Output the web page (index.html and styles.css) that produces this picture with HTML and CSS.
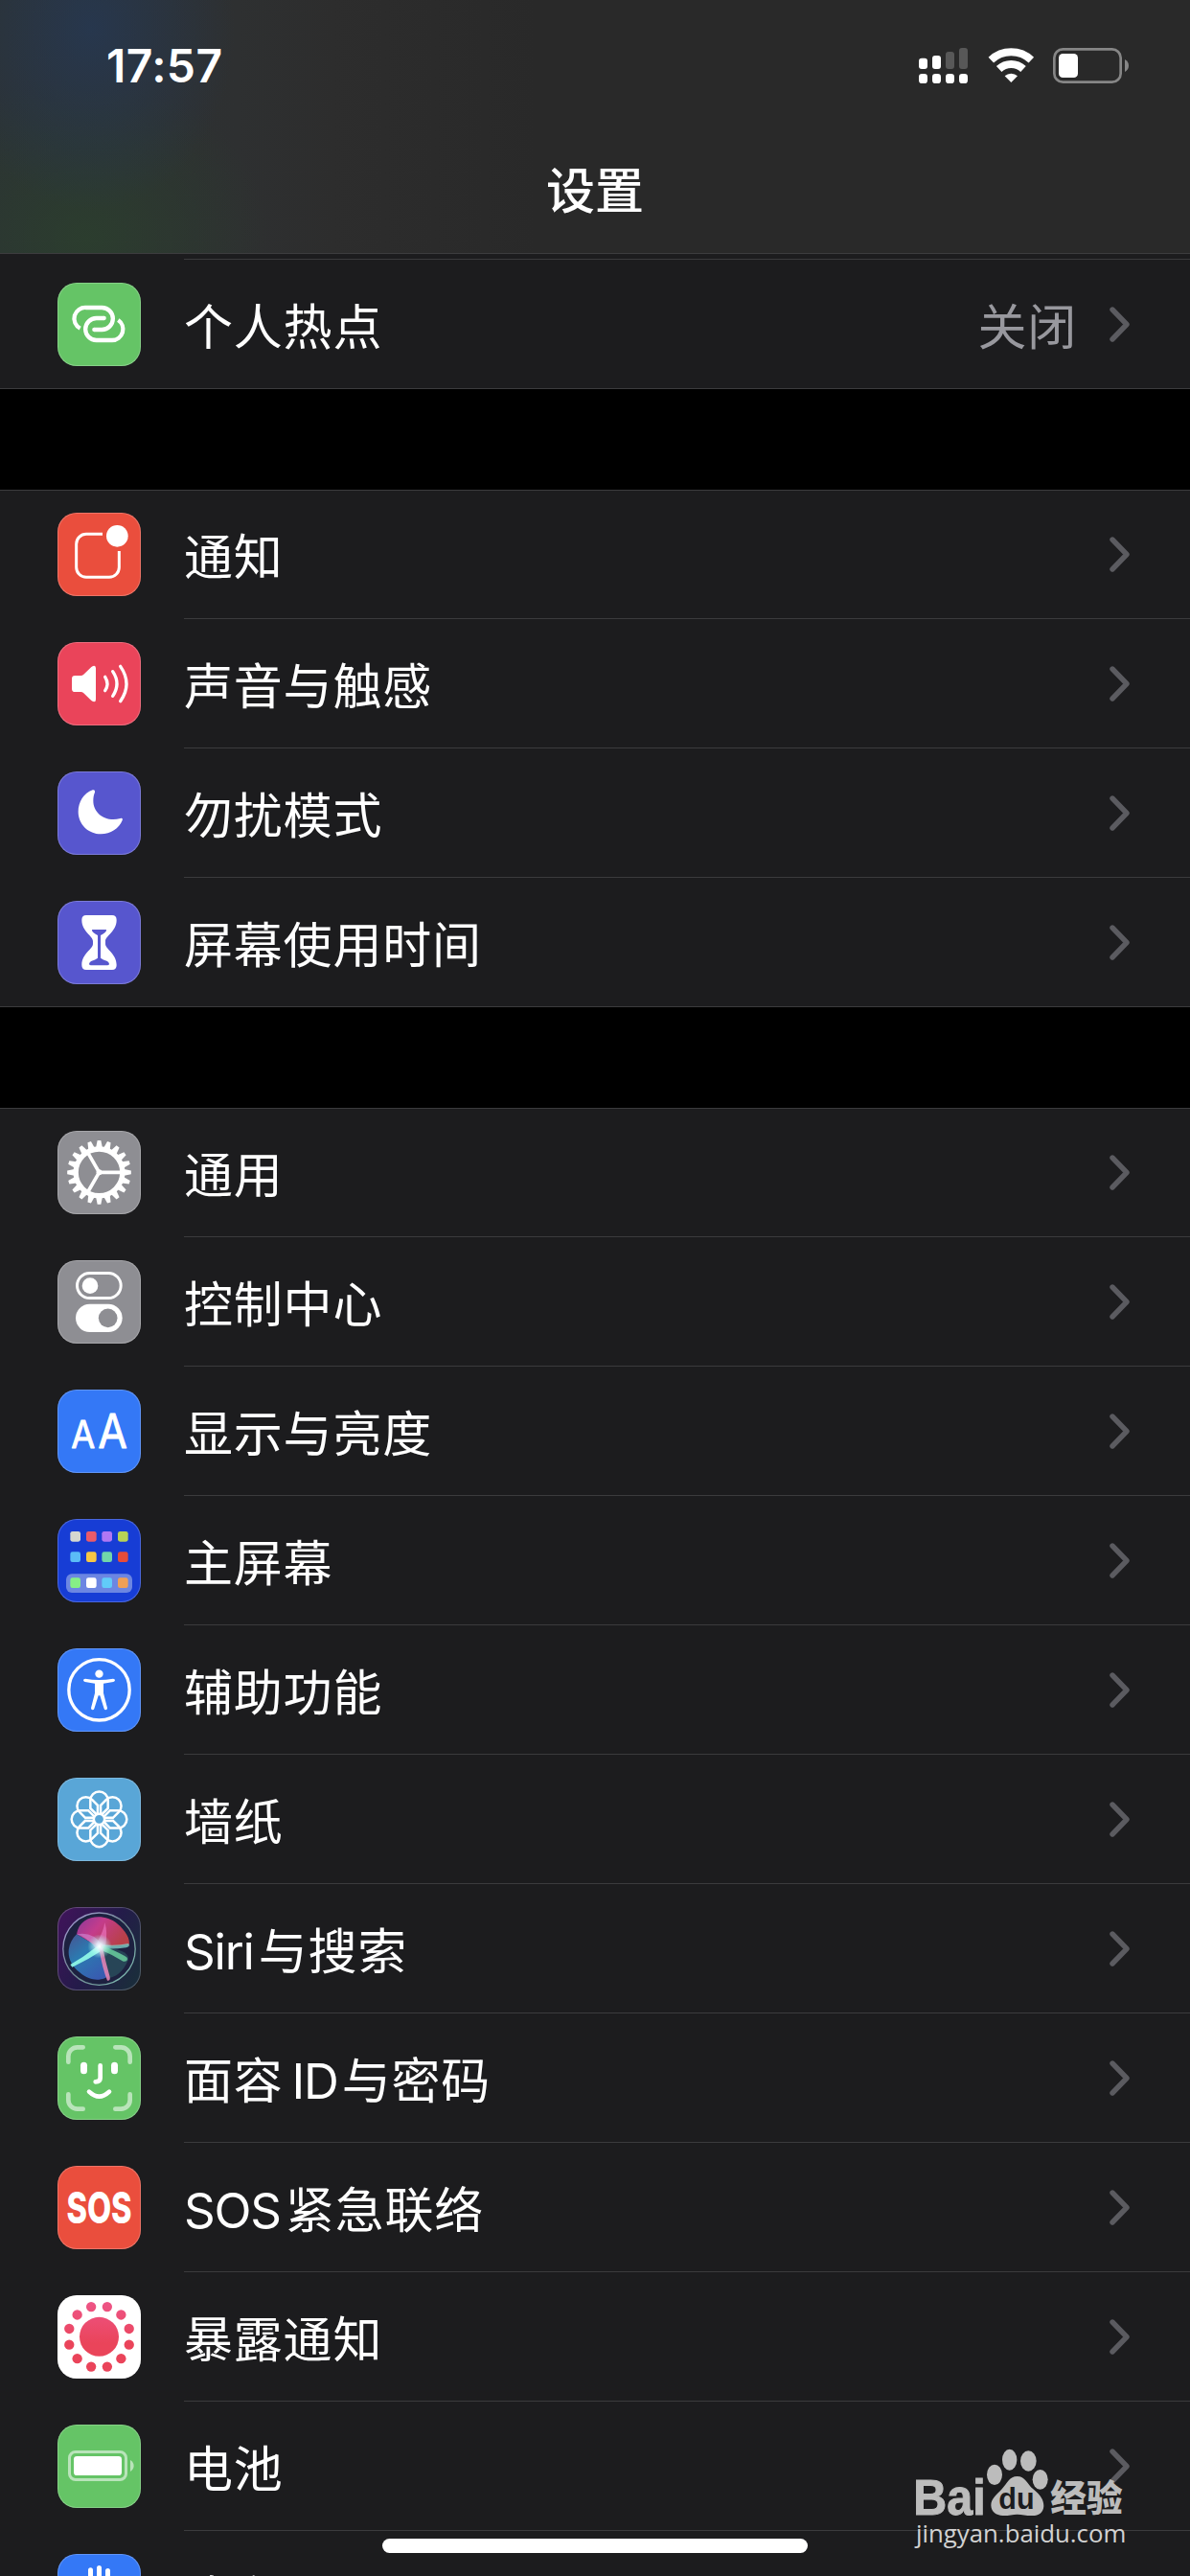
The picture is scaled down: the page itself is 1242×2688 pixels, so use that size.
FILE: index.html
```html
<!DOCTYPE html>
<html lang="zh-CN">
<head>
<meta charset="utf-8">
<title>设置</title>
<link rel="stylesheet" href="styles.css">
</head>
<body>
<svg class="defs" aria-hidden="true">
  <defs>
    <symbol id="chevron" viewBox="0 0 21 37"><path d="M3 3 L18 18.5 L3 34" fill="none" stroke="#5b5b60" stroke-width="5.4" stroke-linecap="round" stroke-linejoin="round"/></symbol>
    <path id="tooth" d="M-10 -78 L-5.5 -100 H5.5 L10 -78Z"/>
    <g id="teeth"><use href="#tooth"/><use href="#tooth" transform="rotate(18)"/><use href="#tooth" transform="rotate(36)"/><use href="#tooth" transform="rotate(54)"/><use href="#tooth" transform="rotate(72)"/></g>
    <path id="petal" d="M-27.500 -34 V-59 A27.500 27.500 0 0 1 27.500 -59 V-34 L7 -14 H-7Z"/>
    <linearGradient id="virus" gradientUnits="userSpaceOnUse" x1="0" y1="20" x2="0" y2="150"><stop offset="0" stop-color="#ee5587"/><stop offset="1" stop-color="#ea445a"/></linearGradient>
    <radialGradient id="siri-glow"><stop offset="0" stop-color="#fff"/><stop offset=".25" stop-color="#e8fbff" stop-opacity=".85"/><stop offset="1" stop-color="#9fe" stop-opacity="0"/></radialGradient>
    <linearGradient id="siri-pink" x1="0" y1="0" x2="1" y2=".5"><stop offset="0" stop-color="#8a3a9c"/><stop offset=".45" stop-color="#c43c8b"/><stop offset="1" stop-color="#b84048"/></linearGradient>
    <linearGradient id="siri-blue" x1="0" y1="0" x2=".7" y2="1"><stop offset="0" stop-color="#4b5a9c"/><stop offset=".45" stop-color="#2d84bd"/><stop offset="1" stop-color="#3b62bd"/></linearGradient>
    <linearGradient id="siri-ring" x1="0" y1="0" x2="1" y2="1"><stop offset="0" stop-color="#a79ad8"/><stop offset=".5" stop-color="#6f8790"/><stop offset="1" stop-color="#7fc3b5"/></linearGradient>
  </defs>
</svg>

<div class="screen">
  <header class="navbar">
    <div class="status">
      <span class="clock">17:57</span>
      <svg class="status-icons" viewBox="177 87 657 111">
        <g fill="#fff">
          <rect x="177" y="119" width="27" height="34" rx="9"/><rect x="219" y="111" width="27" height="42" rx="9"/>
          <rect x="177" y="168" width="27" height="30" rx="10"/><rect x="219" y="168" width="27" height="30" rx="10"/><rect x="261" y="168" width="27" height="30" rx="10"/><rect x="303" y="168" width="27" height="30" rx="10"/>
          <path d="M466 195 L446 175 A29 29 0 0 1 486 175Z"/>
          <rect x="615" y="105" width="60" height="75" rx="13"/>
        </g>
        <g fill="#585858"><rect x="261" y="99" width="27" height="54" rx="9"/><rect x="303" y="87" width="27" height="66" rx="9"/></g>
        <g fill="none" stroke="#fff" stroke-width="24"><path d="M403 125 A92 92 0 0 1 529 125"/><path d="M428 153 A55 55 0 0 1 504 153"/></g>
        <rect x="601" y="91" width="208" height="103" rx="27" fill="none" stroke="#868686" stroke-width="8"/>
        <path d="M822 123 Q834 130 834 142.500 Q834 155 822 162Z" fill="#868686"/>
      </svg>
    </div>
    <h1 class="title">设置</h1>
  </header>

  <main class="list">
    <section class="group group-first">
      <div class="peek"></div>
      <div class="row">
        <svg class="icon green" viewBox="0 0 261 261"><g fill="none" stroke="#fff" stroke-width="13"><path d="M71 143 A34.500 34.500 0 0 1 90 78 H139 A34.500 34.500 0 0 1 139 147 H115"/><path d="M190 117 A34.500 34.500 0 0 1 171 180 H122 A34.500 34.500 0 0 1 122 111 H146"/></g><g fill="#fff"><circle cx="115" cy="147" r="6.500"/><circle cx="146" cy="111" r="6.500"/></g></svg>
        <div class="cell"><span class="label">个人热点</span><span class="value">关闭</span><svg class="chevron"><use href="#chevron"/></svg></div>
      </div>
    </section>

    <section class="group">
      <div class="row">
        <svg class="icon red" viewBox="0 0 261 261"><path d="M141 67 H90 A31 31 0 0 0 59 98 V171 A31 31 0 0 0 90 202 H162 A31 31 0 0 0 193 171 V120" fill="none" stroke="#fff" stroke-width="9"/><circle cx="187" cy="73" r="34" fill="#fff"/></svg>
        <div class="cell"><span class="label">通知</span><svg class="chevron"><use href="#chevron"/></svg></div>
      </div>
      <div class="row">
        <svg class="icon pink" viewBox="0 0 261 261"><path d="M55 105 H73 Q78 105 82 101 L106 78 Q120 69 120 82 V179 Q120 192 106 183 L82 160 Q78 156 73 156 H55 Q45 156 45 146 V115 Q45 105 55 105Z" fill="#fff"/><g fill="none" stroke="#fff" stroke-width="10" stroke-linecap="round"><path d="M149 109 Q163 131 149 152"/><path d="M173 92 Q199 131 173 169"/><path d="M197 76 Q235 131 197 185"/></g></svg>
        <div class="cell"><span class="label">声音与触感</span><svg class="chevron"><use href="#chevron"/></svg></div>
      </div>
      <div class="row">
        <svg class="icon purple" viewBox="0 0 261 261"><path d="M110 58 C82 68 65 96 65 126 C65 166 97 196 136 196 C166 196 193 178 203 153 C205 148 202 145 197 147 C150 160 112 130 112 92 C112 82 113 75 117 65 C118 59 115 56 110 58Z" fill="#fff"/></svg>
        <div class="cell"><span class="label">勿扰模式</span><svg class="chevron"><use href="#chevron"/></svg></div>
      </div>
      <div class="row">
        <svg class="icon purple" viewBox="0 0 261 261"><path d="M90 45 H171 Q185 45 185 60 C185 96 150 110 150 126 V135 C150 151 185 165 185 201 Q185 216 171 216 H90 Q76 216 76 201 C76 165 111 151 111 135 V126 C111 110 76 96 76 60 Q76 45 90 45Z" fill="#fff"/><path d="M108 90 H153 Q154 95 148 100 Q142 105 135 108 V179 Q142 184 156 189 Q162 193 162 198 Q161 202 156 202 H105 Q100 202 99 198 Q99 193 105 189 Q119 184 126 179 V108 Q119 105 113 100 Q107 95 108 90Z" fill="#5756ce"/></svg>
        <div class="cell"><span class="label">屏幕使用时间</span><svg class="chevron"><use href="#chevron"/></svg></div>
      </div>
    </section>

    <section class="group">
      <div class="row">
        <svg class="icon gray" viewBox="0 0 261 261"><g transform="translate(130.500 130)" fill="#fff"><circle r="73" fill="none" stroke="#fff" stroke-width="16"/><path d="M0 0 H68 M0 0 L-34 -59 M0 0 L-34 59" stroke="#fff" stroke-width="11"/><circle r="9"/><use href="#teeth"/><use href="#teeth" transform="rotate(90)"/><use href="#teeth" transform="rotate(180)"/><use href="#teeth" transform="rotate(270)"/></g></svg>
        <div class="cell"><span class="label">通用</span><svg class="chevron"><use href="#chevron"/></svg></div>
      </div>
      <div class="row">
        <svg class="icon gray" viewBox="0 0 261 261"><rect x="61.500" y="40.500" width="137" height="78" rx="39" fill="none" stroke="#fff" stroke-width="9"/><circle cx="102" cy="80" r="25" fill="#fff"/><rect x="57" y="137" width="146" height="88" rx="44" fill="#fff"/><circle cx="158" cy="181" r="29.500" fill="#8e8e93"/></svg>
        <div class="cell"><span class="label">控制中心</span><svg class="chevron"><use href="#chevron"/></svg></div>
      </div>
      <div class="row">
        <svg class="icon blue" viewBox="0 0 261 261"><g class="aa"><text x="43" y="184" font-size="117" textLength="75" lengthAdjust="spacingAndGlyphs">A</text><text x="127" y="184" font-size="148" textLength="92" lengthAdjust="spacingAndGlyphs">A</text></g></svg>
        <div class="cell"><span class="label">显示与亮度</span><svg class="chevron"><use href="#chevron"/></svg></div>
      </div>
      <div class="row">
        <svg class="icon home" viewBox="0 0 261 261"><rect x="27" y="172" width="207" height="59" rx="18" fill="#6c86e2"/>
          <rect x="40" y="39" width="32" height="32" rx="7" fill="#d6d7d0"/><rect x="90" y="39" width="32" height="32" rx="7" fill="#ea5b69"/><rect x="139" y="39" width="32" height="32" rx="7" fill="#b077f4"/><rect x="189" y="39" width="32" height="32" rx="7" fill="#b8d256"/>
          <rect x="40" y="103" width="32" height="32" rx="7" fill="#5bbcf7"/><rect x="90" y="103" width="32" height="32" rx="7" fill="#f7c745"/><rect x="139" y="103" width="32" height="32" rx="7" fill="#71d6aa"/><rect x="189" y="103" width="32" height="32" rx="7" fill="#e74c39"/>
          <rect x="40" y="184" width="32" height="32" rx="7" fill="#86ef86"/><rect x="90" y="184" width="32" height="32" rx="7" fill="#fff"/><rect x="139" y="184" width="32" height="32" rx="7" fill="#61cbf9"/><rect x="189" y="184" width="32" height="32" rx="7" fill="#f0a056"/></svg>
        <div class="cell"><span class="label">主屏幕</span><svg class="chevron"><use href="#chevron"/></svg></div>
      </div>
      <div class="row">
        <svg class="icon blue" viewBox="0 0 261 261"><circle cx="130.500" cy="130" r="95" fill="none" stroke="#fff" stroke-width="10"/><g fill="#fff"><circle cx="130.500" cy="80" r="12.500"/><path d="M87 95 Q130 103 174 95 Q180 95 180 100 Q180 104 175 105 L144 110 V140 L156 187 Q156 193 151 193 Q147 193 146 189 L133 148 H128 L115 189 Q114 193 110 193 Q105 193 105 187 L117 140 V110 L86 105 Q81 104 81 100 Q81 95 87 95Z"/></g></svg>
        <div class="cell"><span class="label">辅助功能</span><svg class="chevron"><use href="#chevron"/></svg></div>
      </div>
      <div class="row">
        <svg class="icon sky" viewBox="0 0 261 261"><g transform="translate(130.500 130)" fill="none" stroke="#fff" stroke-width="7.500"><use href="#petal"/><use href="#petal" transform="rotate(45)"/><use href="#petal" transform="rotate(90)"/><use href="#petal" transform="rotate(135)"/><use href="#petal" transform="rotate(180)"/><use href="#petal" transform="rotate(225)"/><use href="#petal" transform="rotate(270)"/><use href="#petal" transform="rotate(315)"/><circle r="17" fill="#59a6d7"/></g></svg>
        <div class="cell"><span class="label">墙纸</span><svg class="chevron"><use href="#chevron"/></svg></div>
      </div>
      <div class="row">
        <svg class="icon siri" viewBox="0 0 261 261"><circle cx="130.500" cy="131" r="113" fill="#1d2140" stroke="url(#siri-ring)" stroke-width="4"/>
          <path d="M60 85 C70 20 150 20 185 50 C215 75 228 100 224 118 L130 126Z" fill="url(#siri-pink)"/>
          <path d="M60 85 C25 120 25 170 70 205 C110 240 150 225 160 215 L130 126Z" fill="url(#siri-blue)" opacity=".9"/>
          <path d="M135 125 C190 130 225 140 222 165 C205 205 180 220 160 222Z" fill="#2b4f5c" opacity=".8"/>
          <path d="M120 118 Q145 75 148 48 Q158 80 150 122Z" fill="#f07ac8" opacity=".6"/>
          <path d="M60 85 Q110 75 140 118 L120 128 Q85 90 60 85Z" fill="#d59ae6" opacity=".5"/>
          <path d="M140 118 Q190 122 222 114 Q230 122 215 127 Q180 132 142 130Z" fill="#84d8cd" opacity=".75"/>
          <path d="M140 120 Q200 145 218 158 Q222 172 206 170 Q175 150 136 134Z" fill="#66c79a" opacity=".9"/>
          <path d="M130 118 Q85 155 40 180 L46 188 Q95 165 142 134Z" fill="#8df5e6" opacity=".95"/>
          <path d="M130 128 Q140 190 156 230 Q166 232 164 218 Q150 170 142 128Z" fill="#e083b4" opacity=".9"/>
          <circle cx="132" cy="123" r="38" fill="url(#siri-glow)"/></svg>
        <div class="cell"><span class="label"><span class="latin">Siri</span>与搜索</span><svg class="chevron"><use href="#chevron"/></svg></div>
      </div>
      <div class="row">
        <svg class="icon green" viewBox="0 0 261 261"><g fill="none" stroke="#fff" stroke-width="14" stroke-linecap="round"><path opacity=".55" d="M34 80 V62 A28 28 0 0 1 62 34 H80 M181 34 H199 A28 28 0 0 1 227 62 V80 M227 181 V199 A28 28 0 0 1 199 227 H181 M80 227 H62 A28 28 0 0 1 34 199 V181"/><path d="M134 91 V130 Q134 142 119 142 M99 173 Q130.500 203 162 173"/></g><g fill="#fff"><rect x="72" y="80" width="21" height="38" rx="10.500"/><rect x="168" y="80" width="21" height="38" rx="10.500"/></g></svg>
        <div class="cell"><span class="label">面容<span class="latin id">ID</span>与密码</span><svg class="chevron"><use href="#chevron"/></svg></div>
      </div>
      <div class="row">
        <svg class="icon red" viewBox="0 0 261 261"><text class="sos" x="130.500" y="179" transform="translate(130.500 0) scale(.73 1) translate(-130.500 0)">SOS</text></svg>
        <div class="cell"><span class="label"><span class="latin">SOS</span>紧急联络</span><svg class="chevron"><use href="#chevron"/></svg></div>
      </div>
      <div class="row">
        <svg class="icon white" viewBox="0 0 261 261"><g fill="url(#virus)"><circle cx="130.500" cy="130" r="61.500"/><circle cx="155.600" cy="36.300" r="15.500"/><circle cx="199.100" cy="61.400" r="15.500"/><circle cx="224.200" cy="104.900" r="15.500"/><circle cx="224.200" cy="155.100" r="15.500"/><circle cx="199.100" cy="198.600" r="15.500"/><circle cx="155.600" cy="223.700" r="15.500"/><circle cx="105.400" cy="223.700" r="15.500"/><circle cx="61.900" cy="198.600" r="15.500"/><circle cx="36.800" cy="155.100" r="15.500"/><circle cx="36.800" cy="104.900" r="15.500"/><circle cx="61.900" cy="61.400" r="15.500"/><circle cx="105.400" cy="36.300" r="15.500"/></g></svg>
        <div class="cell"><span class="label">暴露通知</span><svg class="chevron"><use href="#chevron"/></svg></div>
      </div>
      <div class="row">
        <svg class="icon green" viewBox="0 0 261 261"><g opacity=".55"><rect x="37.500" y="85.500" width="177" height="87" rx="19" fill="none" stroke="#fff" stroke-width="9"/><path d="M228 111 Q239 118 239 129 Q239 140 228 147Z" fill="#fff"/></g><rect x="51" y="99" width="150" height="60" rx="10" fill="#fff"/></svg>
        <div class="cell"><span class="label">电池</span><svg class="chevron"><use href="#chevron"/></svg></div>
      </div>
      <div class="row">
        <svg class="icon blue" viewBox="0 0 261 261"><g fill="#fff"><rect x="96" y="43" width="15" height="110" rx="7.500"/><rect x="123" y="36" width="15" height="110" rx="7.500"/><rect x="150" y="45" width="15" height="110" rx="7.500"/></g></svg>
        <div class="cell"><span class="label">隐私</span><svg class="chevron"><use href="#chevron"/></svg></div>
      </div>
    </section>
  </main>

  <svg class="watermark" viewBox="0 0 1026 564">
    <g fill="#bcbcbc">
      <text class="wm-logo" x="160" y="372" textLength="226" lengthAdjust="spacingAndGlyphs">Bai</text>
      <ellipse cx="414" cy="247" rx="24" ry="32"/><ellipse cx="461" cy="200" rx="23" ry="33"/><ellipse cx="520" cy="204" rx="25" ry="32"/><ellipse cx="557" cy="262" rx="24" ry="31"/>
      <path d="M485 252 C510 252 515 275 535 292 C560 312 568 328 568 345 C567 368 550 376 530 375 C512 375 500 371 485 371 C470 371 455 376 440 375 C418 374 404 364 403 343 C403 322 420 310 437 292 C455 272 460 252 485 252Z"/>
      <text class="wm-cjk" x="589" y="361" textLength="226" lengthAdjust="spacingAndGlyphs">经验</text>
    </g>
    <text class="wm-du" x="427" y="355" textLength="112" lengthAdjust="spacingAndGlyphs">du</text>
    <text class="wm-url" x="168" y="460" textLength="658" lengthAdjust="spacingAndGlyphs">jingyan.baidu.com</text>
  </svg>
  <div class="home-indicator"></div>
</div>
</body>
</html>
```
FILE: styles.css
```css
* { box-sizing: border-box; }

body {
  margin: 0;
  background: #000;
  color: #fff;
  font-family: Inter, "Noto Sans CJK SC", sans-serif;
}

.defs { position: absolute; width: 0; height: 0; }

.screen {
  position: relative;
  width: 1242px;
  height: 2688px;
  overflow: hidden;
  background: #000;
}

/* Navigation bar */
.navbar {
  height: 265px;
  border-bottom: 1px solid #3c3c3e;
  background:
    radial-gradient(ellipse 150px 190px at 95px 30px, rgba(38, 56, 82, .85), rgba(38, 56, 82, 0)),
    radial-gradient(ellipse 190px 170px at 90px 250px, rgba(43, 64, 45, .8), rgba(43, 64, 45, 0)),
    linear-gradient(90deg, #2c3234 0, #2e3031 20%, #2d2d2d 28%, #292929 45%, #292929 100%);
}

.status {
  display: flex;
  align-items: center;
  justify-content: space-between;
  height: 136px;
  padding: 0 64px 0 111px;
}

.clock { font-size: 48px; font-weight: 600; letter-spacing: .4px; }
.status-icons { width: 219px; height: 37px; }

.title {
  margin: 0;
  padding-top: 33px;
  font-size: 51px;
  line-height: 62px;
  font-weight: 500;
  text-align: center;
}

/* Grouped list */
.list { display: flex; flex-direction: column; gap: 105px; }
.group { background: #1c1c1e; box-shadow: inset 0 1px #3b3b3d, inset 0 -1px #3b3b3d; }
.group-first { box-shadow: inset 0 -1px #3b3b3d; }
.peek { height: 6px; margin-left: 192px; border-bottom: 1px solid #3b3b3d; }

.row { display: flex; align-items: center; height: 135px; padding-left: 60px; }

.cell {
  display: flex;
  flex: 1;
  align-items: center;
  height: 135px;
  margin-left: 45px;
  padding-right: 63px;
  border-bottom: 1px solid #3b3b3d;
}
.row:last-child .cell { border-bottom-color: transparent; }

.label, .value { padding-top: 7px; font-size: 51px; line-height: 62px; letter-spacing: .8px; white-space: nowrap; }
.label { flex: 1; }
.value { margin-right: 34px; color: #98989e; }
.latin { letter-spacing: -1.2px; margin-right: 5px; }
.id { margin-left: 9px; margin-right: 4px; }
.chevron { width: 21px; height: 37px; }

/* Row icons */
.icon {
  flex: none;
  width: 87px;
  height: 87px;
  border-radius: 20px;
  box-shadow: inset 0 0 0 1px rgba(255, 255, 255, .22);
}
.green { background: #65c466; }
.red { background: #ea4e3d; }
.pink { background: #ea445a; }
.purple { background: #5756ce; }
.gray { background: #8e8e93; }
.blue { background: #3478f6; }
.home { background: #173dd5; }
.sky { background: #59a6d7; }
.siri { background: linear-gradient(120deg, #3c1558 10%, #241b4a 50%, #1b2c3c 90%); }
.white { background: #fff; }

.aa { fill: #fff; stroke: #fff; stroke-width: 2.5; stroke-linejoin: round; font-weight: 400; }
.sos { fill: #fff; font-size: 134px; font-weight: 800; text-anchor: middle; }

/* Overlays */
.watermark { position: absolute; left: 900px; top: 2500px; width: 342px; height: 188px; }
.wm-logo { font: bold 153px "Liberation Sans", sans-serif; stroke: #bcbcbc; stroke-width: 3; }
.wm-cjk { font: 900 113px "Noto Sans CJK SC", sans-serif; }
.wm-du { font: bold 94px "Liberation Sans", sans-serif; fill: #1c1c1e; }
.wm-url { font: 500 77px "Open Sans", sans-serif; fill: #d2d2d2; }

.home-indicator {
  position: absolute;
  left: 399px;
  top: 2649px;
  width: 444px;
  height: 15px;
  border-radius: 8px;
  background: #fff;
}
```
